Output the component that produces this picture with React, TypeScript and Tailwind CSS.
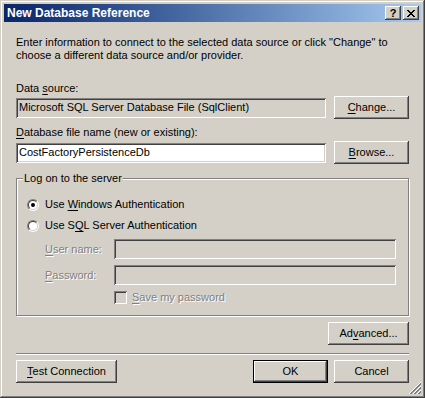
const raised =
  "shadow-[inset_-1px_-1px_#404040,inset_1px_1px_#ffffff,inset_-2px_-2px_#808080,inset_2px_2px_#d4d0c8]"
const sunken =
  "shadow-[inset_1px_1px_#808080,inset_-1px_-1px_#ffffff,inset_2px_2px_#404040,inset_-2px_-2px_#d4d0c8]"
const disabledText = "text-[#808080] [text-shadow:1px_1px_0_#ffffff]"

function U({ children }: { children: React.ReactNode }) {
  return <span className="underline underline-offset-[2px]">{children}</span>
}

function Button({
  children,
  width = "w-[75px]",
  isDefault = false,
}: {
  children: React.ReactNode
  width?: string
  isDefault?: boolean
}) {
  if (isDefault) {
    return (
      <div className={`${width} h-[23px] border border-black flex`}>
        <div className={`flex-1 flex items-center justify-center bg-[#d4d0c8] ${raised}`}>{children}</div>
      </div>
    )
  }
  return (
    <div className={`${width} h-[23px] flex items-center justify-center bg-[#d4d0c8] ${raised}`}>{children}</div>
  )
}

function Radio({ checked }: { checked?: boolean }) {
  return (
    <div className="w-[12px] h-[12px] rounded-full border border-t-[#808080] border-l-[#808080] border-r-white border-b-white flex shrink-0">
      <div className="flex-1 rounded-full border border-t-[#404040] border-l-[#404040] border-r-[#d4d0c8] border-b-[#d4d0c8] bg-white flex items-center justify-center">
        {checked && <div className="w-[4px] h-[4px] rounded-full bg-black" />}
      </div>
    </div>
  )
}

function TitleButton({ children }: { children: React.ReactNode }) {
  return (
    <div className={`w-[16px] h-[14px] bg-[#d4d0c8] ${raised} flex items-center justify-center`}>{children}</div>
  )
}

function SizeGrip() {
  return (
    <svg width="12" height="12" viewBox="0 0 12 12" shapeRendering="crispEdges">
      {[0, 4, 8].map((o) => (
        <g key={o}>
          <line x1={o} y1="12" x2="12" y2={o} stroke="#ffffff" strokeWidth="1" />
          <line x1={o + 1} y1="12" x2="12" y2={o + 1} stroke="#808080" strokeWidth="1" />
          <line x1={o + 2} y1="12" x2="12" y2={o + 2} stroke="#808080" strokeWidth="1" />
        </g>
      ))}
    </svg>
  )
}

export default function App() {
  return (
    <div
      className="relative w-[425px] h-[398px] bg-[#d4d0c8] p-[4px] flex flex-col text-[11px] text-black font-['Liberation_Sans',Arial,sans-serif] shadow-[inset_-1px_-1px_#404040,inset_1px_1px_#d4d0c8,inset_-2px_-2px_#808080,inset_2px_2px_#ffffff]"
    >
      {/* Title bar */}
      <div className="h-[18px] flex items-center bg-gradient-to-r from-[#0a246a] to-[#a6caf0] pl-[3px] pr-[2px]">
        <div className="flex-1 text-white font-bold text-[12px]">New Database Reference</div>
        <div className="flex gap-[2px]">
          <TitleButton>
            <span className="font-bold text-[11px] leading-none">?</span>
          </TitleButton>
          <TitleButton>
            <svg width="8" height="7" viewBox="0 0 8 7" shapeRendering="crispEdges">
              <path d="M0 0h2v1h1v1h2V1h1V0h2v1H7v1H6v1H5v1h1v1h1v1h1v1H6V6H5V5H3v1H2v1H0V6h1V5h1V4h1V3H2V2H1V1H0z" fill="#000" />
            </svg>
          </TitleButton>
        </div>
      </div>

      {/* Body */}
      <div className="flex-1 flex flex-col px-[12px] leading-[13px]">
        <p className="mt-[14px]">
          Enter information to connect to the selected data source or click "Change" to
          <br />
          choose a different data source and/or provider.
        </p>

        <div className="mt-[20px]">
          Data <U>s</U>ource:
        </div>
        <div className="mt-[1px] flex items-center justify-between">
          <div className={`w-[310px] h-[20px] bg-[#d4d0c8] ${sunken} flex items-center pl-[3px]`}>
            Microsoft SQL Server Database File (SqlClient)
          </div>
          <Button>
            <span>
              <U>C</U>hange...
            </span>
          </Button>
        </div>

        <div className="mt-[7px]">
          <U>D</U>atabase file name (new or existing):
        </div>
        <div className="mt-[2px] flex items-center justify-between">
          <div className={`w-[310px] h-[20px] bg-white ${sunken} flex items-center pl-[3px]`}>
            CostFactoryPersistenceDb
          </div>
          <Button>
            <span>
              <U>B</U>rowse...
            </span>
          </Button>
        </div>

        {/* Log on group */}
        <fieldset className="mt-[8px] border border-[#808080] shadow-[1px_1px_0_#ffffff,inset_1px_1px_0_#ffffff] pb-[11px]">
          <legend className="ml-[6px] px-[1px] bg-[#d4d0c8] h-[13px]">Log on to the server</legend>
          <div className="pl-[10px] pr-[12px]">
            <div className="mt-[13px] flex items-center gap-[6px]">
              <Radio checked />
              <span>
                Use <U>W</U>indows Authentication
              </span>
            </div>
            <div className="mt-[8px] flex items-center gap-[6px]">
              <Radio />
              <span>
                Use S<U>Q</U>L Server Authentication
              </span>
            </div>
            <div className="mt-[7px] flex items-center">
              <div className={`w-[87px] pl-[18px] ${disabledText}`}>
                <U>U</U>ser name:
              </div>
              <div className={`flex-1 h-[20px] bg-[#d4d0c8] ${sunken}`} />
            </div>
            <div className="mt-[6px] flex items-center">
              <div className={`w-[87px] pl-[18px] ${disabledText}`}>
                <U>P</U>assword:
              </div>
              <div className={`flex-1 h-[20px] bg-[#d4d0c8] ${sunken}`} />
            </div>
            <div className="mt-[6px] flex items-center gap-[5px] pl-[87px]">
              <div className={`w-[13px] h-[13px] bg-[#d4d0c8] ${sunken}`} />
              <span className={disabledText}>
                <U>S</U>ave my password
              </span>
            </div>
          </div>
        </fieldset>

        <div className="mt-[6px] flex justify-end">
          <Button width="w-[81px]">
            <span>
              Ad<U>v</U>anced...
            </span>
          </Button>
        </div>

        <div className="mt-[8px] h-[2px] border-t border-t-[#808080] border-b border-b-white" />

        <div className="mt-[5px] flex items-center">
          <Button width="w-[101px]">
            <span>
              <U>T</U>est Connection
            </span>
          </Button>
          <div className="flex-1" />
          <Button isDefault>OK</Button>
          <div className="w-[6px]" />
          <Button>Cancel</Button>
        </div>
      </div>

      <div className="absolute right-[4px] bottom-[4px]">
        <SizeGrip />
      </div>
    </div>
  )
}
